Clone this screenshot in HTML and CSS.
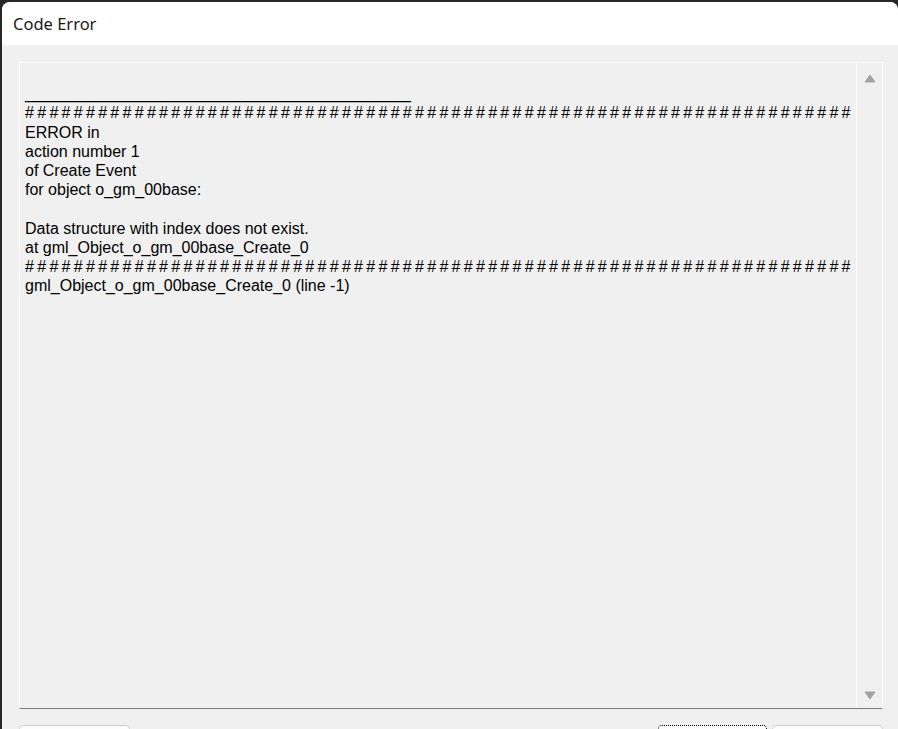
FILE: index.html
```html
<!DOCTYPE html>
<html lang="en">
<head>
<meta charset="utf-8">
<title>Code Error</title>
<link rel="stylesheet" href="styles.css">
</head>
<body>
<div class="window">
  <header class="titlebar">Code Error</header>
  <main class="content">
    <div class="textbox">
<pre class="log">

<span class="rule">___________________________________________</span>
<span class="hashes">####################################################################</span>
ERROR in
action number 1
of Create Event
for object o_gm_00base:

Data structure with index does not exist.
at gml_Object_o_gm_00base_Create_0
<span class="hashes">####################################################################</span>
gml_Object_o_gm_00base_Create_0 (line -1)</pre>
      <div class="scrollbar">
        <svg class="arrow" width="12" height="9" viewBox="0 0 12 9"><polygon points="6,1 11,8 1,8" fill="#a3a3a3" stroke="#a3a3a3" stroke-width="1" stroke-linejoin="round"/></svg>
        <svg class="arrow" width="12" height="9" viewBox="0 0 12 9"><polygon points="1,1 11,1 6,8" fill="#a3a3a3" stroke="#a3a3a3" stroke-width="1" stroke-linejoin="round"/></svg>
      </div>
    </div>
    <div class="buttons">
      <button class="btn" aria-label="Copy"></button>
      <span class="spacer"></span>
      <button class="btn btn-focus" aria-label="Ignore"></button>
      <button class="btn" aria-label="Abort"></button>
    </div>
  </main>
</div>
</body>
</html>
```

FILE: styles.css
```css
html, body {
  margin: 0;
  padding: 0;
  height: 100%;
  overflow: hidden;
}
body {
  background: #272727;
  font-family: "Liberation Sans", Arial, sans-serif;
}
.window {
  margin: 2px 0 0 2px;
  background: #f0f0f0;
  border-radius: 8px 8px 0 0;
  overflow: hidden;
  min-height: 800px;
}
.titlebar {
  height: 43px;
  background: #ffffff;
  padding-left: 11px;
  box-sizing: border-box;
  font-family: "Noto Sans", "Open Sans", sans-serif;
  font-size: 16.5px;
  line-height: 43px;
  color: #1a1a1a;
}
.content {
  padding: 17px 15px 0 17px;
}
.textbox {
  display: flex;
  height: 647px;
  box-sizing: border-box;
  border: 1px solid #fbfbfb;
  border-bottom-color: #7c7c7c;
  background: #f0f0f0;
}
.log {
  flex: 1;
  margin: 0;
  padding: 2px 0 0 5px;
  font-family: "Liberation Sans", Arial, sans-serif;
  font-size: 16px;
  line-height: 19.2px;
  color: #000;
  white-space: pre;
  overflow: hidden;
}
.rule {
  letter-spacing: 0.08px;
}
.hashes {
  letter-spacing: 3.29px;
}
.scrollbar {
  width: 25px;
  border-left: 1px solid #fbfbfb;
  display: flex;
  flex-direction: column;
  justify-content: space-between;
  align-items: center;
  padding: 11px 0 8px;
}
.arrow {
  display: block;
}
.buttons {
  display: flex;
  gap: 5px;
  margin-top: 16px;
}
.spacer {
  flex: 1;
}
.btn {
  width: 111px;
  height: 30px;
  box-sizing: border-box;
  background: #fdfdfd;
  border: 1px solid #d0d0d0;
  border-radius: 4px;
  padding: 0;
}
.btn-focus {
  width: 109px;
  border: 1px dotted #000;
  margin-right: 0;
}
```
